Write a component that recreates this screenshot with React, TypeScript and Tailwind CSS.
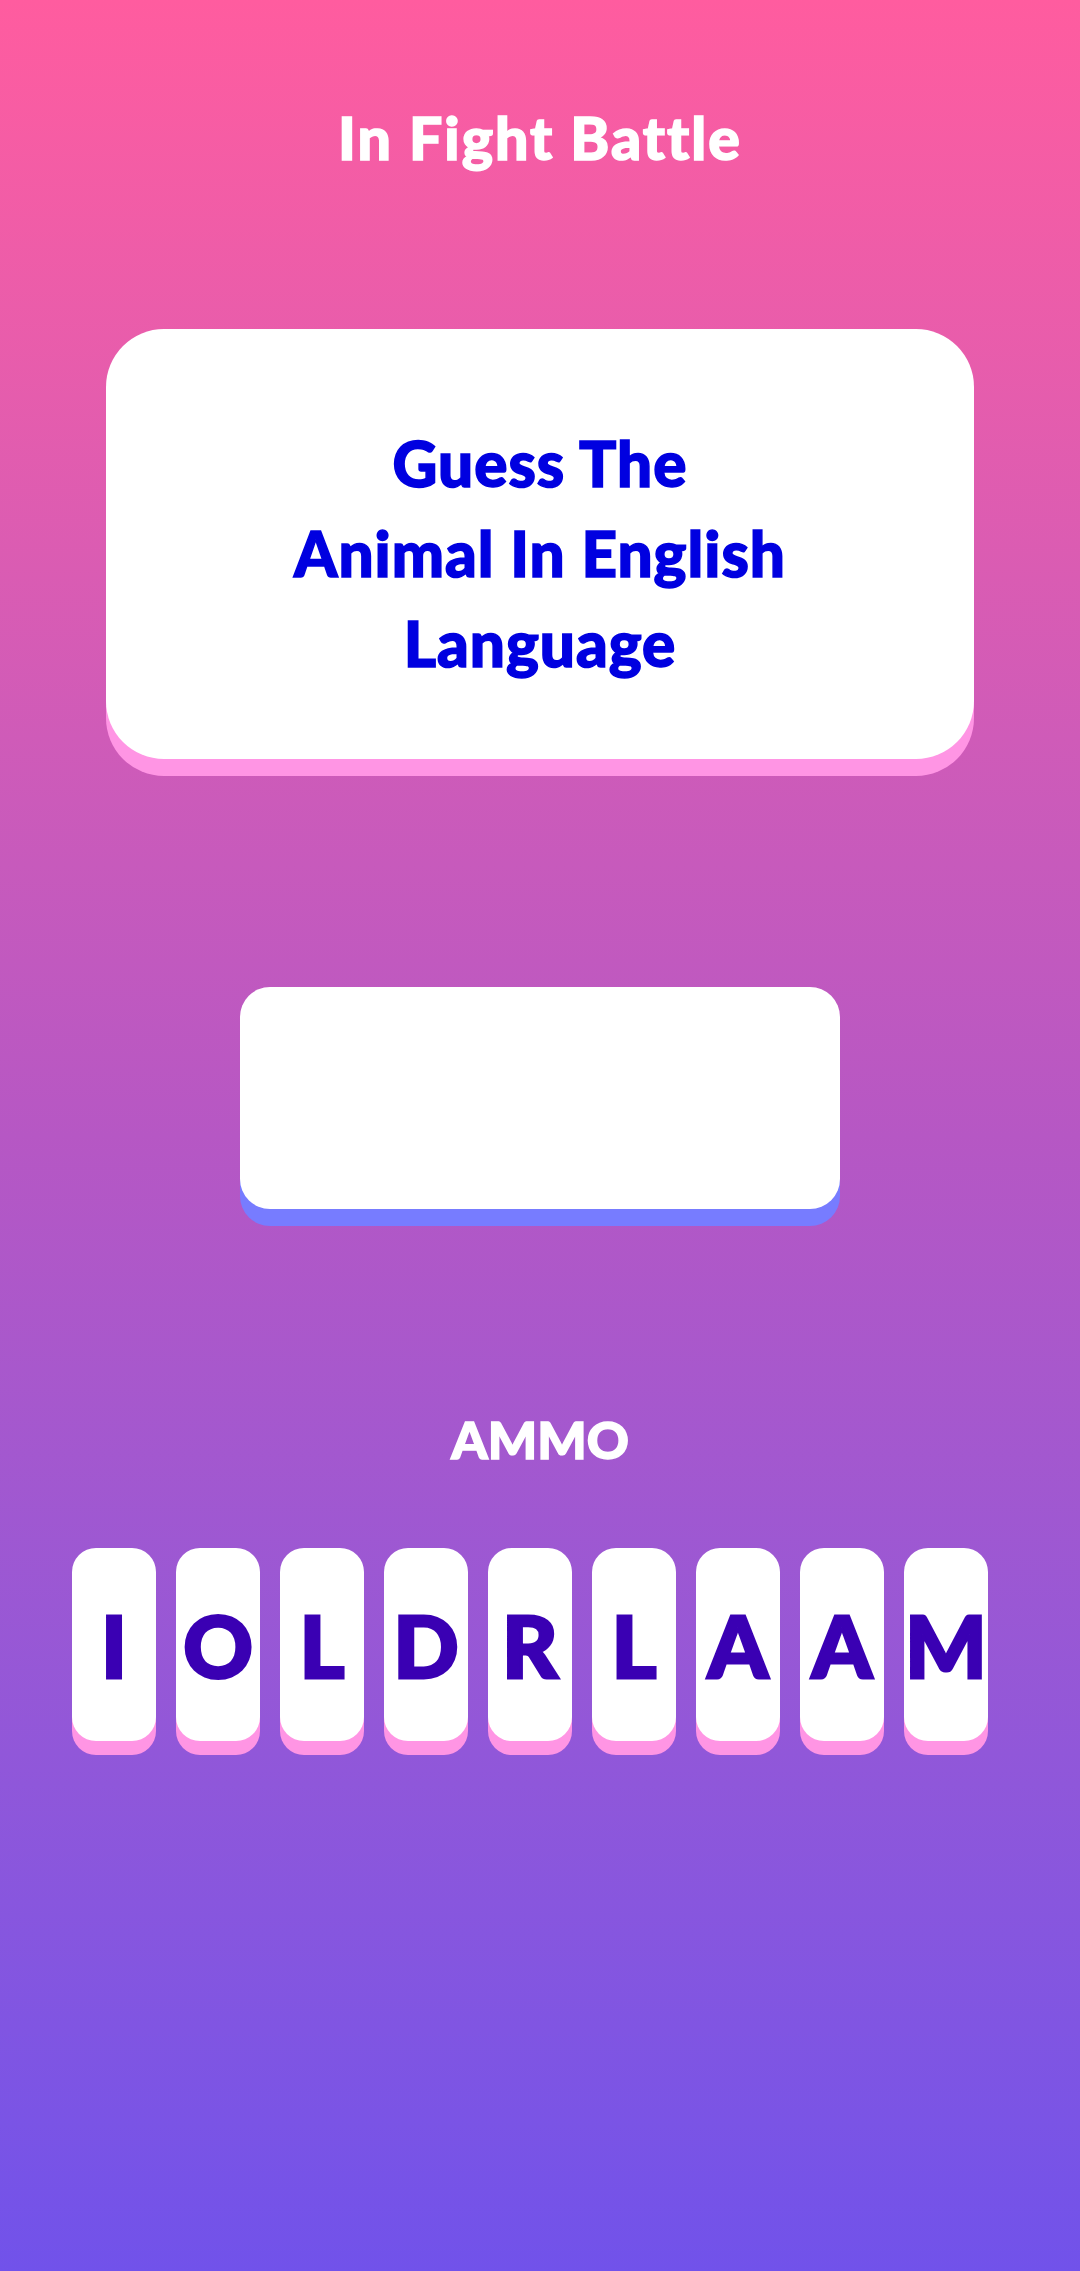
const letters = ["I", "O", "L", "D", "R", "L", "A", "A", "M"]

export default function App() {
  return (
    <div className="min-h-[2271px] w-full bg-gradient-to-b from-[#ff5c9f] via-[#b657c4] to-[#7152ea] font-['Lato',sans-serif] flex flex-col items-center">
      <h1 className="mt-[103px] text-[59px] leading-[70px] font-black text-white tracking-[2px] [-webkit-text-stroke:1.5px_white]">
        In Fight Battle
      </h1>

      <div className="mt-[156px] w-[868px] h-[430px] bg-white rounded-[58px] shadow-[0_17px_0_#ff95e4] flex items-center justify-center pt-[18px]">
        <p className="text-center text-[62px] leading-[90px] font-black text-[#0000e0] tracking-[1px] [-webkit-text-stroke:1.5px_#0000e0]">
          Guess The
          <br />
          Animal In English
          <br />
          Language
        </p>
      </div>

      <div className="mt-[228px] w-[600px] h-[222px] bg-white rounded-[30px] shadow-[0_17px_0_#777cff]" />

      <div className="mt-[199px] text-[52px] leading-[62px] font-black text-white [-webkit-text-stroke:1.5px_white]">AMMO</div>

      <div className="mt-[78px] w-full flex gap-[20px] pl-[72px]">
        {letters.map((l, i) => (
          <div
            key={i}
            className="w-[84px] h-[193px] bg-white rounded-[24px] shadow-[0_14px_0_#ff95e4] flex items-center justify-center text-[86px] font-black text-[#3a00b3] [-webkit-text-stroke:3px_#3a00b3]"
          >
            {l}
          </div>
        ))}
      </div>
    </div>
  )
}
